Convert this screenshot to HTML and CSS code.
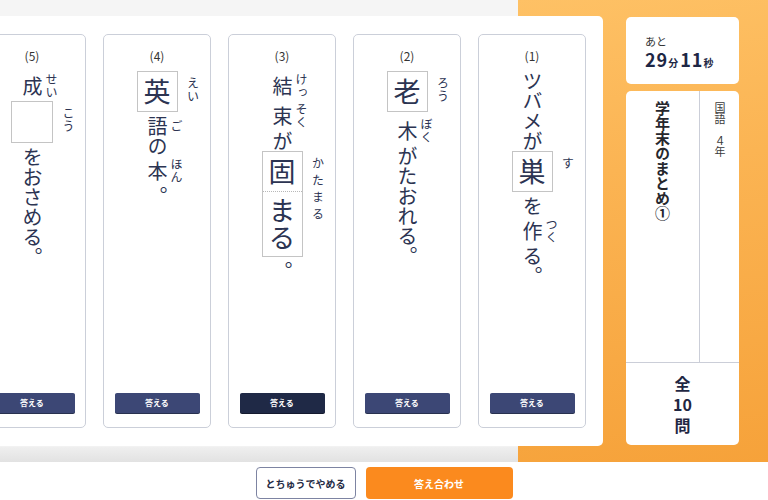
FILE: index.html
```html
<!DOCTYPE html>
<html lang="ja">
<head>
<meta charset="utf-8">
<title>学年末のまとめ①</title>
<link rel="stylesheet" href="styles.css">
</head>
<body>
<div class="app">
  <main class="stage">
    <section class="panel">
      <article class="card">
        <div class="card__num">(1)</div>
        <div class="sentence">
          <div class="seg"><span class="base v">ツバメが</span></div>
          <div class="seg seg--box">
            <div class="box"><span class="box__cell v">巣</span></div>
            <span class="rt v">す</span>
          </div>
          <div class="seg"><span class="base v">を</span></div>
          <div class="seg"><span class="base v">作</span><span class="rt v">つく</span></div>
          <div class="seg"><span class="base v">る。</span></div>
        </div>
        <button class="answer">答える</button>
      </article>

      <article class="card">
        <div class="card__num">(2)</div>
        <div class="sentence">
          <div class="seg seg--box">
            <div class="box"><span class="box__cell v">老</span></div>
            <span class="rt v">ろう</span>
          </div>
          <div class="seg"><span class="base v">木</span><span class="rt v">ぼく</span></div>
          <div class="seg"><span class="base v">がたおれる。</span></div>
        </div>
        <button class="answer">答える</button>
      </article>

      <article class="card">
        <div class="card__num">(3)</div>
        <div class="sentence">
          <div class="seg"><span class="base v">結</span><span class="rt v">けっ</span></div>
          <div class="seg"><span class="base v">束</span><span class="rt v">そく</span></div>
          <div class="seg"><span class="base v">が</span></div>
          <div class="seg seg--box">
            <div class="box">
              <span class="box__cell v">固</span>
              <span class="box__cell box__cell--okuri v">まる</span>
            </div>
            <span class="rt rt--spread v">かたまる</span>
          </div>
          <div class="seg"><span class="base v">。</span></div>
        </div>
        <button class="answer answer--active">答える</button>
      </article>

      <article class="card">
        <div class="card__num">(4)</div>
        <div class="sentence">
          <div class="seg seg--box">
            <div class="box"><span class="box__cell v">英</span></div>
            <span class="rt v">えい</span>
          </div>
          <div class="seg"><span class="base v">語</span><span class="rt v">ご</span></div>
          <div class="seg"><span class="base v">の</span></div>
          <div class="seg"><span class="base v">本</span><span class="rt v">ほん</span></div>
          <div class="seg"><span class="base v">。</span></div>
        </div>
        <button class="answer">答える</button>
      </article>

      <article class="card">
        <div class="card__num">(5)</div>
        <div class="sentence">
          <div class="seg"><span class="base v">成</span><span class="rt v">せい</span></div>
          <div class="seg seg--box">
            <div class="box box--empty"></div>
            <span class="rt v">こう</span>
          </div>
          <div class="seg"><span class="base v">をおさめる。</span></div>
        </div>
        <button class="answer">答える</button>
      </article>
    </section>

    <aside class="side">
      <div class="timer">
        <div class="timer__label">あと</div>
        <div class="timer__value"><span class="num">29</span><span class="unit">分</span><span class="num">11</span><span class="unit">秒</span></div>
      </div>
      <div class="info">
        <div class="info__title-cell"><h1 class="info__title v">学年末のまとめ①</h1></div>
        <div class="info__meta-cell"><p class="info__meta v">国語　４年</p></div>
        <div class="info__count">
          <span class="info__count-line">全</span>
          <span class="info__count-line">10</span>
          <span class="info__count-line">問</span>
        </div>
      </div>
    </aside>
  </main>

  <footer class="footer">
    <button class="btn btn--outline">とちゅうでやめる</button>
    <button class="btn btn--primary">答え合わせ</button>
  </footer>
</div>
</body>
</html>
```

FILE: styles.css
```css
* {
  box-sizing: border-box;
}

html,
body {
  margin: 0;
  padding: 0;
}

body {
  width: 768px;
  height: 500px;
  overflow: hidden;
  background: #fff;
  color: #2c3452;
  font-family: "Noto Sans CJK JP", "Noto Sans", sans-serif;
}

.app {
  display: flex;
  flex-direction: column;
  height: 500px;
}

/* ---------- stage ---------- */
.stage {
  flex: none;
  height: 462px;
  display: flex;
  align-items: flex-start;
  padding-top: 16px;
  background-image:
    linear-gradient(to bottom, #f5f5f5 0, #f5f5f5 446px, #efefef 447px, #e2e2e2 462px),
    linear-gradient(172deg, #ffc66c 0%, #fbb453 45%, #f6a23a 100%);
  background-size: 518px 100%, 100% 100%;
  background-repeat: no-repeat;
}

.panel {
  flex: none;
  width: 603px;
  height: 430px;
  background: #fff;
  border-radius: 0 5px 5px 0;
  display: flex;
  flex-direction: row-reverse;
  gap: 17px;
  padding: 18px 17px;
  overflow: hidden;
}

/* ---------- question card ---------- */
.card {
  flex: none;
  width: 108px;
  height: 394px;
  border: 1px solid #cbcfd9;
  border-radius: 5px;
  display: flex;
  flex-direction: column;
  align-items: center;
  padding: 13px 0 14px;
}

.card__num {
  font-size: 12px;
  line-height: 16px;
  color: #333;
}

.sentence {
  align-self: stretch;
  margin-top: 7px;
  display: flex;
  flex-direction: column;
}

.v {
  writing-mode: vertical-rl;
  white-space: nowrap;
}

.seg {
  display: grid;
  grid-template-columns: 1fr auto 1fr;
  align-items: center;
}

.base {
  grid-column: 2;
  justify-self: center;
  font-size: 20px;
  line-height: 20px;
}

.rt {
  grid-column: 3;
  justify-self: start;
  margin-left: 3px;
  padding: 2px 0;
  font-size: 12px;
  line-height: 12px;
  letter-spacing: 1px;
}

.seg--box {
  margin-bottom: 4px;
}

.seg--box .rt {
  align-self: start;
  margin-left: 9px;
  margin-top: 4px;
}

.rt--spread {
  letter-spacing: 5px;
}

.box {
  grid-column: 2;
  justify-self: center;
  display: flex;
  flex-direction: column;
  border: 1px solid #c4c4c4;
}

.box__cell {
  display: block;
  font-size: 27px;
  line-height: 27px;
  padding: 6px;
}

.box__cell--okuri {
  border-top: 1px dotted #b8b8b8;
  padding: 5px 6px;
}

.box--empty {
  width: 42px;
  height: 42px;
}

.answer {
  margin-top: auto;
  width: 85px;
  height: 20px;
  padding: 0;
  border: 0;
  border-radius: 2px;
  background: #3c4775;
  box-shadow: 0 1px 0 #28314f;
  color: #fff;
  font-family: "Noto Sans CJK JP", sans-serif;
  font-size: 8px;
  font-weight: 700;
  line-height: 20px;
}

.answer--active {
  background: #1f2946;
  box-shadow: 0 1px 0 #141a2e;
}

/* ---------- side ---------- */
.side {
  flex: none;
  width: 113px;
  margin-left: 23px;
  margin-top: 1px;
  display: flex;
  flex-direction: column;
  gap: 7px;
}

.timer {
  height: 67px;
  background: #fff;
  border-radius: 5px;
  padding: 17px 0 0 19px;
}

.timer__label {
  font-size: 11px;
  line-height: 14px;
  color: #333;
}

.timer__value {
  display: flex;
  align-items: baseline;
  height: 20px;
  margin-top: 1px;
  white-space: nowrap;
  font-weight: 700;
  color: #1e2745;
}

.num {
  font-size: 18px;
  line-height: 20px;
  letter-spacing: 1px;
}

.unit {
  font-size: 10px;
  line-height: 12px;
  margin-right: 2px;
}

.info {
  height: 354px;
  background: #fff;
  border-radius: 5px;
  display: grid;
  grid-template-columns: 74px 1fr;
  grid-template-rows: 1fr 83px;
}

.info__title-cell,
.info__meta-cell {
  display: flex;
  justify-content: center;
  align-items: flex-start;
}

.info__title-cell {
  border-right: 1px solid #cbced8;
  padding-top: 10px;
}

.info__meta-cell {
  padding-top: 11px;
}

.info__title {
  margin: 0;
  font-size: 15px;
  line-height: 15px;
  font-weight: 700;
  color: #26272d;
}

.info__meta {
  margin: 0;
  font-size: 11px;
  line-height: 11px;
  color: #3a3a3a;
}

.info__count {
  grid-column: 1 / -1;
  border-top: 1px solid #cbced8;
  display: flex;
  flex-direction: column;
  align-items: center;
  justify-content: center;
  font-size: 16px;
  font-weight: 700;
  color: #1f2743;
}

.info__count-line {
  display: block;
  height: 21px;
  line-height: 21px;
}

/* ---------- footer ---------- */
.footer {
  flex: none;
  height: 38px;
  display: flex;
  justify-content: center;
  gap: 10px;
  padding-top: 5px;
  background: #fff;
}

.btn {
  height: 32px;
  padding: 0;
  border-radius: 4px;
  font-family: "Noto Sans CJK JP", sans-serif;
  font-size: 10px;
  font-weight: 700;
}

.btn--outline {
  width: 100px;
  border: 1px solid #7d84a2;
  background: #fff;
  color: #252b45;
}

.btn--primary {
  width: 147px;
  border: 0;
  background: #fb8a1e;
  color: #fff;
}
```
